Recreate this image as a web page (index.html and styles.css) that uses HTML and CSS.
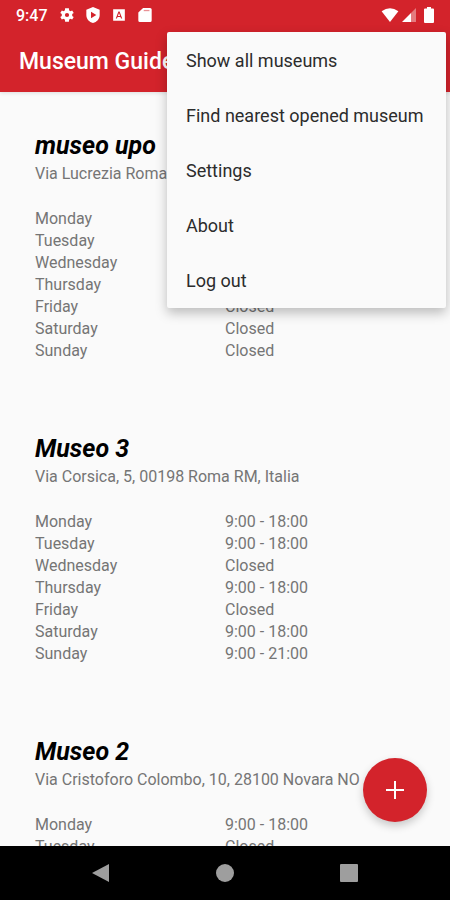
FILE: index.html
```html
<!DOCTYPE html>
<html lang="en">
<head>
<meta charset="utf-8">
<meta name="viewport" content="width=device-width, initial-scale=1">
<title>Museum Guide</title>
<link rel="stylesheet" href="styles.css">
</head>
<body>
<header class="top">
  <div class="status">
    <span class="clock">9:47</span>
    <svg class="icon" viewBox="2 2 20 20"><path fill-rule="evenodd" d="M19.4 13.500a7.500 7.500 0 0 0 0-3l2.200-1.200-2.200-3.800-2.600 1a7.500 7.500 0 0 0-1.700-1L14.700 2.500H9.300l-.4 3a7.500 7.500 0 0 0-1.700 1l-2.600-1-2.200 3.800L4.600 10.500a7.500 7.500 0 0 0 0 3l-2.200 1.200 2.200 3.800 2.600-1a7.500 7.500 0 0 0 1.700 1l.4 3h5.400l.4-3a7.500 7.500 0 0 0 1.700-1l2.600 1 2.200-3.800zM12 15a3 3 0 1 1 0-6 3 3 0 0 1 0 6z"/></svg>
    <svg class="icon shield" viewBox="2 0 20 24"><path fill-rule="evenodd" d="M12 0L2 4v8c0 6 4.200 10.500 10 12 5.800-1.500 10-6 10-12V4zM9 7l8 5-8 5z"/></svg>
    <svg class="icon" viewBox="0 0 24 24"><path fill-rule="evenodd" d="M2 2h20v20H2zM11 6L6.500 18h2l1-2.600h5L15.500 18h2L13 6zM12 8.600l1.900 5h-3.800z"/></svg>
    <svg class="icon" viewBox="1 1 22 22"><path d="M9 1H20a2.500 2.500 0 0 1 2.500 2.500v17A2.500 2.500 0 0 1 20 23H4a2.500 2.500 0 0 1-2.500-2.500V8z"/><path class="slot" d="M10 4h9v2h-9z"/></svg>
    <span class="signals">
      <svg class="wifi" viewBox="0 0 18 15"><path d="M0 3.500Q9-3 18 3.500L9 15z"/></svg>
      <svg class="icon" viewBox="0 0 14 14"><path d="M0 14L9 5v9z"/><path class="faint" d="M9 5l5-5v14H9z"/></svg>
      <svg class="battery" viewBox="0 0 10 16"><path d="M3 0h4v1.500h2a1 1 0 0 1 1 1V15a1 1 0 0 1-1 1H1a1 1 0 0 1-1-1V2.500a1 1 0 0 1 1-1h2z"/></svg>
    </span>
  </div>
  <h1 class="title">Museum Guide</h1>
  <div class="menu" role="menu">
    <button class="item" role="menuitem">Show all museums</button>
    <button class="item" role="menuitem">Find nearest opened museum</button>
    <button class="item" role="menuitem">Settings</button>
    <button class="item" role="menuitem">About</button>
    <button class="item" role="menuitem">Log out</button>
  </div>
</header>
<main class="list">
  <section class="museum">
    <h2 class="name">museo upo</h2>
    <p class="address">Via Lucrezia Roma</p>
    <table class="hours">
      <tr><th scope="row">Monday</th><td></td></tr>
      <tr><th scope="row">Tuesday</th><td></td></tr>
      <tr><th scope="row">Wednesday</th><td></td></tr>
      <tr><th scope="row">Thursday</th><td></td></tr>
      <tr><th scope="row">Friday</th><td>Closed</td></tr>
      <tr><th scope="row">Saturday</th><td>Closed</td></tr>
      <tr><th scope="row">Sunday</th><td>Closed</td></tr>
    </table>
  </section>
  <section class="museum">
    <h2 class="name">Museo 3</h2>
    <p class="address">Via Corsica, 5, 00198 Roma RM, Italia</p>
    <table class="hours">
      <tr><th scope="row">Monday</th><td>9:00 - 18:00</td></tr>
      <tr><th scope="row">Tuesday</th><td>9:00 - 18:00</td></tr>
      <tr><th scope="row">Wednesday</th><td>Closed</td></tr>
      <tr><th scope="row">Thursday</th><td>9:00 - 18:00</td></tr>
      <tr><th scope="row">Friday</th><td>Closed</td></tr>
      <tr><th scope="row">Saturday</th><td>9:00 - 18:00</td></tr>
      <tr><th scope="row">Sunday</th><td>9:00 - 21:00</td></tr>
    </table>
  </section>
  <section class="museum">
    <h2 class="name">Museo 2</h2>
    <p class="address">Via Cristoforo Colombo, 10, 28100 Novara NO</p>
    <table class="hours">
      <tr><th scope="row">Monday</th><td>9:00 - 18:00</td></tr>
      <tr><th scope="row">Tuesday</th><td>Closed</td></tr>
    </table>
  </section>
</main>
<button class="fab" aria-label="Add museum"><svg viewBox="0 0 18 18"><path d="M8 0h2v8h8v2h-8v8H8v-8H0V8h8z"/></svg></button>
<nav class="nav">
  <button class="key" aria-label="Back"><svg viewBox="0 0 20 20"><path d="M18 1v18L1 10z"/></svg></button>
  <button class="key" aria-label="Home"><svg viewBox="0 0 20 20"><circle cx="10" cy="10" r="9"/></svg></button>
  <button class="key" aria-label="Recent apps"><svg viewBox="0 0 20 20"><rect x="1" y="1" width="18" height="18" rx="1"/></svg></button>
</nav>
</body>
</html>
```
FILE: styles.css
```css
* {
  box-sizing: border-box;
}

body {
  margin: 0;
  height: 100vh;
  display: flex;
  flex-direction: column;
  position: relative;
  overflow: hidden;
  background: #fafafa;
  font-family: Roboto, sans-serif;
}

button {
  border: 0;
  padding: 0;
  font: inherit;
}

svg {
  display: block;
}

.top {
  position: relative;
  z-index: 2;
  background: #d3232b;
  color: #fff;
  box-shadow: 0 1px 4px rgba(0, 0, 0, 0.12);
}

.status {
  display: flex;
  align-items: center;
  gap: 12px;
  height: 30px;
  padding: 0 16px;
  fill: #fff;
}

.clock {
  font-size: 16px;
  font-weight: 500;
}

.icon {
  width: 14px;
  height: 14px;
}

.shield {
  height: 16px;
}

.slot {
  fill: #d3232b;
  opacity: 0.5;
}

.faint {
  opacity: 0.4;
}

.signals {
  display: flex;
  align-items: center;
  gap: 3px;
  margin-left: auto;
}

.wifi {
  width: 18px;
  height: 14px;
}

.battery {
  width: 10px;
  height: 16px;
  margin-left: 5px;
}

.title {
  margin: 0;
  padding: 0 19px;
  font-size: 23px;
  font-weight: 500;
  line-height: 64px;
  height: 62px;
}

.menu {
  position: absolute;
  top: 32px;
  right: 4px;
  min-width: 62%;
  padding: 1px 19px 0;
  display: flex;
  flex-direction: column;
  background: #fafafa;
  border-radius: 2px;
  box-shadow: 0 5px 12px rgba(0, 0, 0, 0.25);
}

.item {
  height: 55px;
  background: none;
  color: #2c2c2c;
  font-size: 18px;
  text-align: left;
  white-space: nowrap;
}

.list {
  flex: 1;
  min-height: 0;
  overflow: hidden;
  padding: 40px 35px 0;
  color: #757575;
  font-size: 16px;
  line-height: 22px;
}

.museum {
  margin-bottom: 73px;
}

.name {
  margin: 0 0 3px;
  color: #000;
  font-size: 25px;
  font-style: italic;
  font-weight: 700;
  line-height: 28px;
}

.address {
  margin: 0 0 23px;
  white-space: nowrap;
}

.hours {
  width: 100%;
  table-layout: fixed;
  border-collapse: collapse;
}

.hours th,
.hours td {
  width: 50%;
  padding: 0;
  font-weight: 400;
  text-align: left;
}

.fab {
  position: absolute;
  right: 23px;
  bottom: 78px;
  width: 64px;
  height: 64px;
  display: grid;
  place-items: center;
  border-radius: 50%;
  background: #d3232b;
  fill: #fff;
  box-shadow: 0 4px 8px rgba(0, 0, 0, 0.2);
}

.fab svg {
  width: 18px;
  height: 18px;
}

.nav {
  display: flex;
  justify-content: center;
  gap: 104px;
  height: 54px;
  background: #000;
}

.key {
  display: grid;
  place-items: center;
  background: none;
  fill: #9e9e9e;
}

.key svg {
  width: 20px;
  height: 20px;
}
```
